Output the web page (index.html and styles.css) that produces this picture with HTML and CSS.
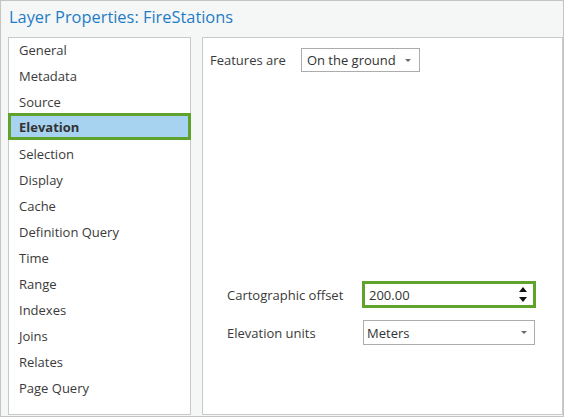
FILE: index.html
```html
<!DOCTYPE html>
<html>
<head>
<meta charset="utf-8">
<link rel="stylesheet" href="styles.css">
</head>
<body>
<div class="window">
  <div class="title">Layer Properties: FireStations</div>
  <div class="panels">
    <ul class="nav">
      <li class="item">General</li>
      <li class="item">Metadata</li>
      <li class="item">Source</li>
      <li class="item selected">Elevation</li>
      <li class="item">Selection</li>
      <li class="item">Display</li>
      <li class="item">Cache</li>
      <li class="item">Definition Query</li>
      <li class="item">Time</li>
      <li class="item">Range</li>
      <li class="item">Indexes</li>
      <li class="item">Joins</li>
      <li class="item">Relates</li>
      <li class="item">Page Query</li>
    </ul>
    <div class="content">
      <div class="top-row">
        <span class="label">Features are</span>
        <div class="select small">
          <span>On the ground</span>
          <span class="caret"></span>
        </div>
      </div>
      <div class="form">
        <span class="label">Cartographic offset</span>
        <div class="spin">
          <span>200.00</span>
          <span class="arrows"><span class="up"></span><span class="down"></span></span>
        </div>
        <span class="label">Elevation units</span>
        <div class="select wide">
          <span>Meters</span>
          <span class="caret"></span>
        </div>
      </div>
    </div>
  </div>
</div>
</body>
</html>
```
FILE: styles.css
```css
* { box-sizing: border-box; }
body {
  margin: 0;
  font-family: "Open Sans", "Noto Sans", sans-serif;
  background: #ffffff;
}
.window {
  width: 564px;
  height: 417px;
  border: 1px solid #c4c4c4;
  background: #f5f7f7;
  padding: 0 0 1px 7px;
}
.title {
  height: 36px;
  line-height: 32px;
  font-size: 16.4px;
  color: #1f7cc6;
  padding-left: 1px;
}
.panels {
  display: flex;
  gap: 11px;
  height: 378px;
}
.nav {
  list-style: none;
  margin: 0;
  padding: 0;
  width: 183px;
  height: 378px;
  border: 1px solid #c9c9c9;
  background: #ffffff;
}
.item {
  height: 26px;
  line-height: 26px;
  font-size: 13px;
  color: #3a3a3a;
  padding-left: 10px;
}
.item:first-child {
  margin-top: -1px;
}
.item.selected {
  height: 27px;
  margin: -2px -1px 1px -1px;
  border: 3px solid #5fa22c;
  background: #a7d3f1;
  padding: 2px 0 0 8px;
  line-height: 19px;
  font-weight: 700;
  color: #333;
}
.content {
  width: 361px;
  height: 378px;
  border: 1px solid #c9c9c9;
  background: #ffffff;
  display: flex;
  flex-direction: column;
}
.label {
  font-size: 13px;
  color: #3a3a3a;
}
.top-row {
  display: flex;
  align-items: center;
  padding: 10px 0 0 7px;
  gap: 15px;
}
.select {
  display: flex;
  align-items: center;
  justify-content: space-between;
  border: 1px solid #acacac;
  background: #fff;
  font-size: 13px;
  color: #333;
}
.select.small {
  width: 119px;
  height: 24px;
  padding: 0 8px 0 5px;
}
.caret {
  width: 0;
  height: 0;
  border-left: 3px solid transparent;
  border-right: 3px solid transparent;
  border-top: 3px solid #6a6a6a;
}
.form {
  margin-top: 209px;
  padding-left: 24px;
  display: grid;
  grid-template-columns: 135px 174px;
  row-gap: 12px;
  align-items: center;
}
.spin {
  height: 27px;
  border: 3px solid #5fa22c;
  display: flex;
  align-items: center;
  justify-content: space-between;
  padding: 0 6px 0 4px;
  font-size: 13px;
  color: #333;
}
.arrows {
  display: flex;
  flex-direction: column;
  gap: 5px;
}
.up, .down {
  width: 0;
  height: 0;
  border-left: 4px solid transparent;
  border-right: 4px solid transparent;
}
.up { border-bottom: 5px solid #111; }
.down { border-top: 5px solid #111; }
.select.wide {
  width: 172px;
  height: 25px;
  margin-left: 1px;
  padding: 0 7px 0 3px;
}
```
